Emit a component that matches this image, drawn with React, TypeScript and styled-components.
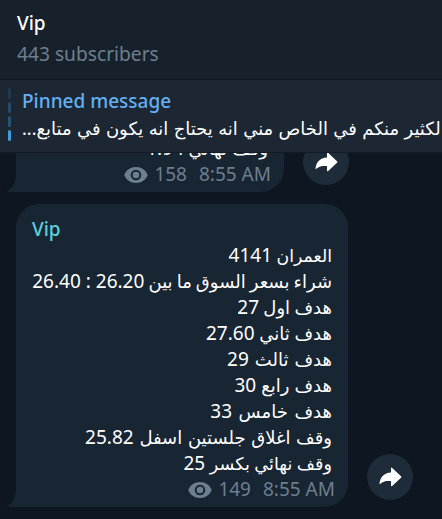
import React from 'react';
import styled, { createGlobalStyle } from 'styled-components';

const latin = '"Noto Sans", "Open Sans", "DejaVu Sans", sans-serif';

const GlobalStyle = createGlobalStyle`
  * { box-sizing: border-box; }
  body { margin: 0; background: #0e1621; overflow: hidden; font-family: ${latin}; }
`;

const Window = styled.div`
  width: 442px;
  height: 519px;
  display: flex;
  flex-direction: column;
  overflow: hidden;
  background: #0e1621;
`;

const Header = styled.header`
  flex: 0 0 80px;
  padding: 8px 17px 0;
  background: #17212b;
  border-bottom: 1px solid #101923;
`;

const Title = styled.div`
  font-size: 19px;
  font-weight: 500;
  line-height: 30px;
  color: #ffffff;
`;

const Subscribers = styled.div`
  font-size: 19.2px;
  line-height: 32px;
  color: #6d7f8f;
`;

const PinnedBar = styled.section`
  flex: 0 0 73px;
  display: flex;
  gap: 11px;
  padding: 8px 0 0 8px;
  background: #1c2733;
  border-bottom: 1px solid #121b26;
`;

const Marks = styled.div`
  width: 3px;
  display: flex;
  flex-direction: column;
  gap: 3px;
`;

const Mark = styled.i<{ $color: string }>`
  height: 11px;
  border-radius: 1.5px;
  background: ${(p) => p.$color};
`;

const PinnedBody = styled.div`
  flex: 1;
  min-width: 0;
`;

const PinnedTitle = styled.div`
  font-size: 19px;
  font-weight: 500;
  line-height: 26px;
  color: #64b0f2;
`;

const PinnedText = styled.div`
  display: flex;
  height: 28px;
  font-size: 18px;
  line-height: 28px;
  word-spacing: 0.65px;
  color: #ffffff;
  white-space: nowrap;
`;

const Chat = styled.main`
  flex: 1;
  min-height: 0;
  display: flex;
  flex-direction: column;
  gap: 12px;
  padding-left: 7px;
`;

const MessageRow = styled.div<{ $height: number }>`
  flex: none;
  height: ${(p) => p.$height}px;
  display: flex;
  align-items: flex-end;
  overflow: hidden;
`;

const Tail = styled.svg`
  flex: none;
  width: 9px;
  height: 18px;
  display: block;
`;

const Bubble = styled.article<{ $width: number; $clipped?: boolean }>`
  width: ${(p) => p.$width}px;
  height: 100%;
  display: flex;
  flex-direction: column;
  justify-content: flex-end;
  overflow: hidden;
  padding: 0 13px 5px 16px;
  background: #182532;
  border-radius: ${(p) => (p.$clipped ? '0 0 23px 0' : '23px 23px 23px 0')};
`;

const Sender = styled.div`
  font-size: 19px;
  font-weight: 500;
  line-height: 26px;
  color: #5cd0dc;
`;

const Line = styled.p<{ $spacing: number; $size: number }>`
  flex: none;
  margin: 0 3px 0 0;
  height: 26px;
  direction: rtl;
  font-size: ${(p) => p.$size}px;
  line-height: 26px;
  word-spacing: ${(p) => p.$spacing}px;
  color: #ffffff;
  white-space: nowrap;
`;

const Num = styled.span`
  font-size: 19px;
  word-spacing: 0;
`;

const Meta = styled.footer`
  flex: none;
  height: 26px;
  padding-top: 1px;
  display: flex;
  align-items: center;
  justify-content: flex-end;
  font-size: 19px;
  line-height: 25px;
  color: #6d7f8f;
`;

const Eye = styled.svg`
  width: 24px;
  height: 16px;
  margin-right: 6px;
`;

const Time = styled.time`
  margin-left: 12px;
`;

const Share = styled.button`
  flex: none;
  width: 46px;
  height: 46px;
  margin: 0 0 7px 19px;
  padding: 0;
  border: 0;
  border-radius: 50%;
  background: #1e2c39;
`;

const ShareIcon = styled.svg`
  display: block;
  width: 46px;
  height: 46px;
`;

const BubbleTail = () => (
  <Tail viewBox="0 0 9 18">
    <path d="M9 0V18H.6Q-.4 17.6.6 17Q9 11.500 9 0Z" fill="#182532" />
  </Tail>
);

const ShareButton = () => (
  <Share aria-label="Share">
    <ShareIcon viewBox="0 0 46 46">
      <path d="M24 14.200V18.600C17 19.100 13.300 23 12.500 29.600Q12.500 30.600 13.300 29.800C16 27.200 19.200 26.900 24 27V31.600Q24.200 32.800 25.200 32L34 23.800Q34.800 23 34 22.200L25.200 13.900Q24.200 13.200 24 14.200Z" fill="#fff" />
    </ShareIcon>
  </Share>
);

const MessageMeta = ({ views }: { views: number }) => (
  <Meta>
    <Eye viewBox="0 0 24 16">
      <path fillRule="evenodd" fill="#6d7f8f" d="M12 0C6.500 0 2 3.200.3 8C2 12.800 6.500 16 12 16S22 12.800 23.700 8C22 3.200 17.500 0 12 0ZM12 2.700A5.300 5.300 0 1 1 12 13.300A5.300 5.300 0 1 1 12 2.700Z" />
      <circle cx="12" cy="8" r="3.300" fill="#6d7f8f" />
    </Eye>
    <span>{views}</span>
    <Time>8:55 AM</Time>
  </Meta>
);

type LineData = { text: string; value: string; spacing?: number; size?: number };

const lines: LineData[] = [
  { text: 'العمران', value: '4141', size: 17.3 },
  { text: 'شراء بسعر السوق ما بين', value: '26.20 : 26.40', spacing: -0.6 },
  { text: 'هدف اول', value: '27', spacing: -0.4 },
  { text: 'هدف ثاني', value: '27.60' },
  { text: 'هدف ثالث', value: '29', spacing: 1.3 },
  { text: 'هدف رابع', value: '30', spacing: 0.3 },
  { text: 'هدف خامس', value: '33', spacing: 1.9 },
  { text: 'وقف اغلاق جلستين اسفل', value: '25.82', spacing: 1 },
  { text: 'وقف نهائي بكسر', value: '25', size: 17.6 },
];

const TextLine = ({ text, value, spacing = 0, size = 18 }: LineData) => (
  <Line $spacing={spacing} $size={size}>
    {text} <Num>{value}</Num>
  </Line>
);

export default function App() {
  return (
    <>
      <GlobalStyle />
      <Window>
        <Header>
          <Title>Vip</Title>
          <Subscribers>443 subscribers</Subscribers>
        </Header>
        <PinnedBar>
          <Marks>
            <Mark $color="#223a50" />
            <Mark $color="#264b69" />
            <Mark $color="#295375" />
            <Mark $color="#429bdb" />
          </Marks>
          <PinnedBody>
            <PinnedTitle>Pinned message</PinnedTitle>
            <PinnedText>
              <span dir="rtl">لكثير منكم في الخاص مني انه يحتاج انه يكون في متابع...</span>
            </PinnedText>
          </PinnedBody>
        </PinnedBar>
        <Chat>
          <MessageRow $height={39}>
            <BubbleTail />
            <Bubble $width={268} $clipped>
              <TextLine text="وقف نهائي" value="1.94" />
              <MessageMeta views={158} />
            </Bubble>
            <ShareButton />
          </MessageRow>
          <MessageRow $height={303}>
            <BubbleTail />
            <Bubble $width={332}>
              <Sender>Vip</Sender>
              {lines.map((line) => (
                <TextLine key={line.text} {...line} />
              ))}
              <MessageMeta views={149} />
            </Bubble>
            <ShareButton />
          </MessageRow>
        </Chat>
      </Window>
    </>
  );
}
